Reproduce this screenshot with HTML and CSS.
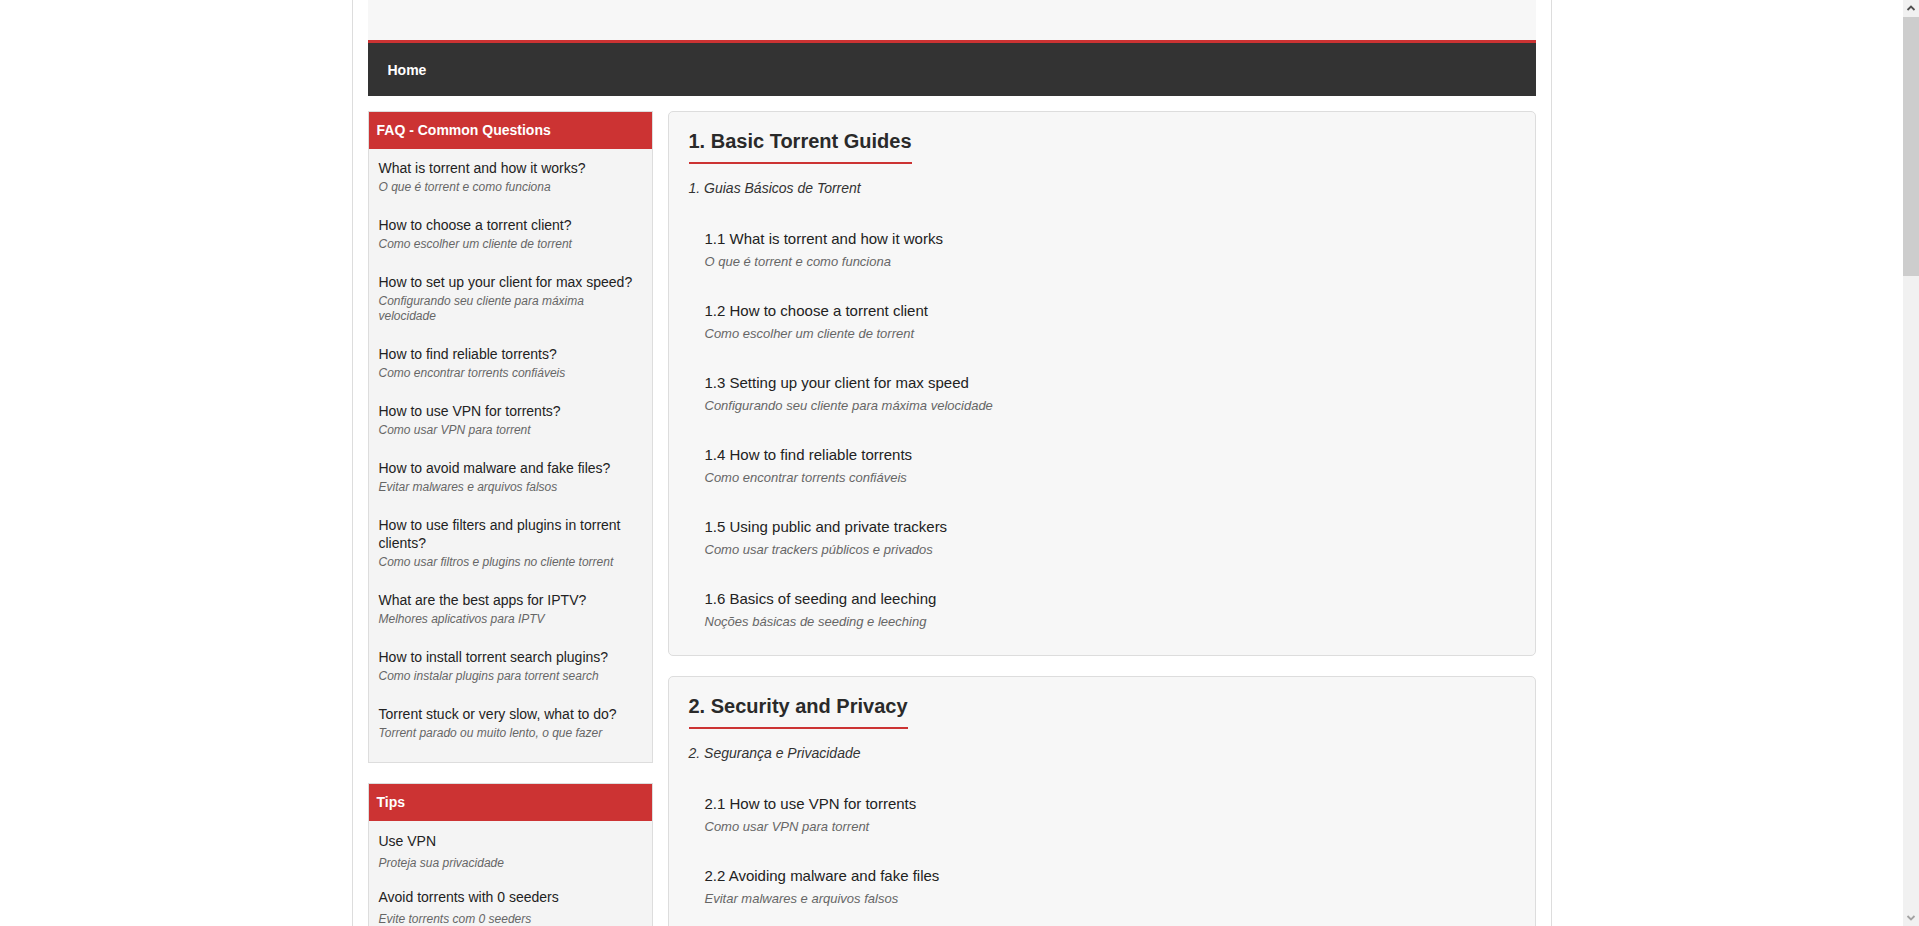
FILE: index.html
```html
<!DOCTYPE html>
<html lang="pt">
<head>
<meta charset="utf-8">
<title>Torrent Guides</title>
<link rel="stylesheet" href="styles.css">
</head>
<body>
<div class="page">
  <header class="site-header">
    <div class="brand"></div>
    <nav class="main-nav"><a href="#" class="nav-link">Home</a></nav>
  </header>
  <div class="layout">
    <aside class="sidebar">
      <section class="side-box">
        <h3 class="side-title">FAQ - Common Questions</h3>
        <ul class="faq-list">
          <li class="faq-item"><a class="faq-q" href="#">What is torrent and how it works?</a><span class="faq-a">O que é torrent e como funciona</span></li>
          <li class="faq-item"><a class="faq-q" href="#">How to choose a torrent client?</a><span class="faq-a">Como escolher um cliente de torrent</span></li>
          <li class="faq-item"><a class="faq-q" href="#">How to set up your client for max speed?</a><span class="faq-a">Configurando seu cliente para máxima velocidade</span></li>
          <li class="faq-item"><a class="faq-q" href="#">How to find reliable torrents?</a><span class="faq-a">Como encontrar torrents confiáveis</span></li>
          <li class="faq-item"><a class="faq-q" href="#">How to use VPN for torrents?</a><span class="faq-a">Como usar VPN para torrent</span></li>
          <li class="faq-item"><a class="faq-q" href="#">How to avoid malware and fake files?</a><span class="faq-a">Evitar malwares e arquivos falsos</span></li>
          <li class="faq-item"><a class="faq-q" href="#">How to use filters and plugins in torrent clients?</a><span class="faq-a">Como usar filtros e plugins no cliente torrent</span></li>
          <li class="faq-item"><a class="faq-q" href="#">What are the best apps for IPTV?</a><span class="faq-a">Melhores aplicativos para IPTV</span></li>
          <li class="faq-item"><a class="faq-q" href="#">How to install torrent search plugins?</a><span class="faq-a">Como instalar plugins para torrent search</span></li>
          <li class="faq-item"><a class="faq-q" href="#">Torrent stuck or very slow, what to do?</a><span class="faq-a">Torrent parado ou muito lento, o que fazer</span></li>
        </ul>
      </section>
      <section class="side-box">
        <h3 class="side-title">Tips</h3>
        <ul class="tips-list">
          <li class="tip-item"><span class="tip-t">Use VPN</span><span class="tip-d">Proteja sua privacidade</span></li>
          <li class="tip-item"><span class="tip-t">Avoid torrents with 0 seeders</span><span class="tip-d">Evite torrents com 0 seeders</span></li>
          <li class="tip-item"><span class="tip-t">Check comments before downloading</span><span class="tip-d">Verifique os comentários antes de baixar</span></li>
          <li class="tip-item"><span class="tip-t">Keep your client updated</span><span class="tip-d">Mantenha seu cliente atualizado</span></li>
        </ul>
      </section>
    </aside>
    <main class="content">
      <section class="panel">
        <h2 class="panel-title">1. Basic Torrent Guides</h2>
        <p class="panel-sub">1. Guias Básicos de Torrent</p>
        <ul class="guide-list">
          <li class="guide"><a class="guide-t" href="#">1.1 What is torrent and how it works</a><span class="guide-d">O que é torrent e como funciona</span></li>
          <li class="guide"><a class="guide-t" href="#">1.2 How to choose a torrent client</a><span class="guide-d">Como escolher um cliente de torrent</span></li>
          <li class="guide"><a class="guide-t" href="#">1.3 Setting up your client for max speed</a><span class="guide-d">Configurando seu cliente para máxima velocidade</span></li>
          <li class="guide"><a class="guide-t" href="#">1.4 How to find reliable torrents</a><span class="guide-d">Como encontrar torrents confiáveis</span></li>
          <li class="guide"><a class="guide-t" href="#">1.5 Using public and private trackers</a><span class="guide-d">Como usar trackers públicos e privados</span></li>
          <li class="guide"><a class="guide-t" href="#">1.6 Basics of seeding and leeching</a><span class="guide-d">Noções básicas de seeding e leeching</span></li>
        </ul>
      </section>
      <section class="panel">
        <h2 class="panel-title">2. Security and Privacy</h2>
        <p class="panel-sub">2. Segurança e Privacidade</p>
        <ul class="guide-list">
          <li class="guide"><a class="guide-t" href="#">2.1 How to use VPN for torrents</a><span class="guide-d">Como usar VPN para torrent</span></li>
          <li class="guide"><a class="guide-t" href="#">2.2 Avoiding malware and fake files</a><span class="guide-d">Evitar malwares e arquivos falsos</span></li>
          <li class="guide"><a class="guide-t" href="#">2.3 Checking torrent health and comments</a><span class="guide-d">Verificando a saúde e os comentários do torrent</span></li>
          <li class="guide"><a class="guide-t" href="#">2.4 Using a kill switch</a><span class="guide-d">Usando o kill switch</span></li>
        </ul>
      </section>
    </main>
  </div>
</div>
<div class="scrollbar" aria-hidden="true">
  <div class="sb-btn">
    <svg width="16" height="17" viewBox="0 0 16 17"><path d="M4.5 10 L8 6.5 L11.5 10" fill="none" stroke="#505050" stroke-width="1.8"/></svg>
  </div>
  <div class="sb-thumb"></div>
  <div class="sb-track"></div>
  <div class="sb-btn">
    <svg width="16" height="17" viewBox="0 0 16 17"><path d="M4.5 7 L8 10.5 L11.5 7" fill="none" stroke="#a3a3a3" stroke-width="1.8"/></svg>
  </div>
</div>
</body>
</html>
```
FILE: styles.css
```css
html, body {
  margin: 0;
  padding: 0;
  background: #fff;
}
body {
  font-family: "Liberation Sans", Arial, sans-serif;
  color: #222;
  padding-right: 16px;
}
a {
  color: inherit;
  text-decoration: none;
}
ul {
  list-style: none;
  margin: 0;
  padding: 0;
}
.page {
  box-sizing: border-box;
  width: 1200px;
  margin: 0 auto;
  padding: 0 15px;
  border-left: 1px solid #ddd;
  border-right: 1px solid #ddd;
  background: #fff;
}
.brand {
  height: 40px;
  background: #f7f7f7;
}
.main-nav {
  height: 53px;
  background: #333;
  border-top: 3px solid #cc3333;
  display: flex;
  align-items: center;
  padding: 0 20px;
}
.nav-link {
  color: #fff;
  font-weight: bold;
  font-size: 14px;
  line-height: 17px;
  padding-top: 1px;
}
.layout {
  display: flex;
  align-items: flex-start;
  gap: 15px;
  margin-top: 15px;
}
.sidebar {
  width: 285px;
  flex: 0 0 285px;
}
.side-box {
  border: 1px solid #ddd;
  background: #f4f4f4;
  margin-bottom: 20px;
}
.side-title {
  margin: 0;
  background: #cc3333;
  color: #fff;
  font-size: 14px;
  line-height: 17px;
  font-weight: bold;
  padding: 10px 8px;
}
.faq-list {
  padding-bottom: 10px;
}
.faq-item {
  padding: 10px 10px 11px;
}
.faq-q {
  display: block;
  font-size: 14px;
  line-height: 18px;
  color: #222;
}
.faq-a {
  display: block;
  margin-top: 3px;
  font-size: 12px;
  line-height: 15px;
  font-style: italic;
  color: #666;
}
.tip-item {
  padding: 11px 10px 6px;
}
.tip-t {
  display: block;
  font-size: 14px;
  line-height: 18px;
  color: #222;
}
.tip-d {
  display: block;
  margin-top: 6px;
  font-size: 12px;
  line-height: 15px;
  font-style: italic;
  color: #666;
}
.content {
  flex: 1;
  min-width: 0;
}
.panel {
  border: 1px solid #ddd;
  border-radius: 5px;
  background: #f7f7f7;
  padding: 17px 20px 10px;
  margin-bottom: 20px;
}
.panel-title {
  display: inline-block;
  margin: 0;
  font-size: 20px;
  line-height: 24px;
  font-weight: bold;
  color: #2a2a2a;
  padding-bottom: 9px;
  border-bottom: 2px solid #cc3333;
}
.panel-sub {
  margin: 14px 0 15px;
  font-size: 14px;
  line-height: 20px;
  font-style: italic;
  color: #333;
}
.guide {
  padding: 15px 0 15px 16px;
}
.guide-t {
  display: block;
  font-size: 15px;
  line-height: 21px;
  color: #222;
}
.guide-d {
  display: block;
  margin-top: 4px;
  font-size: 13px;
  line-height: 17px;
  font-style: italic;
  color: #666;
}
.scrollbar {
  position: fixed;
  top: 0;
  right: 0;
  width: 16px;
  height: 100vh;
  background: #f1f1f1;
  display: flex;
  flex-direction: column;
}
.sb-btn {
  height: 17px;
  flex: 0 0 17px;
  display: flex;
}
.sb-thumb {
  height: 259px;
  flex: 0 0 259px;
  background: #cdcdcd;
}
.sb-track {
  flex: 1;
}
```
